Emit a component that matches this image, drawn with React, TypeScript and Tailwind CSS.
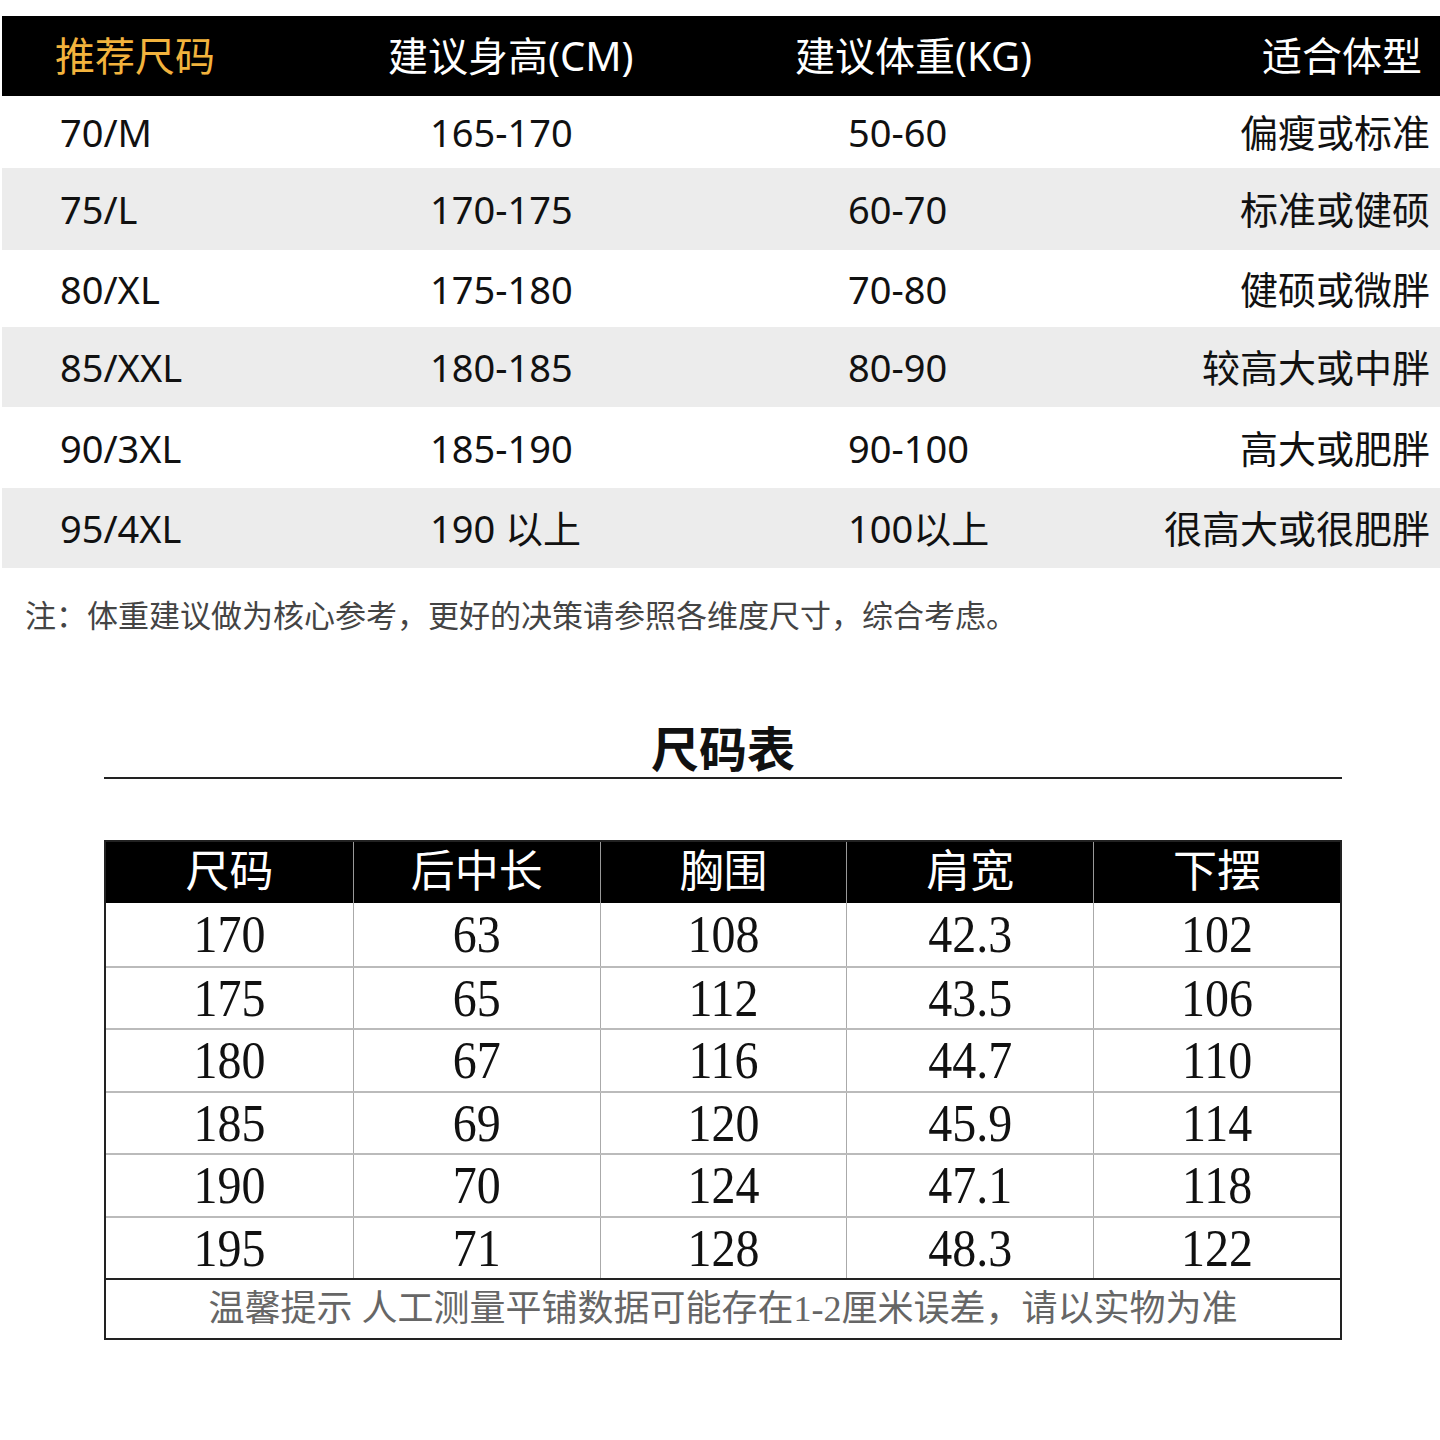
const topRows = [
  { size: "70/M", height: "165-170", weight: "50-60", body: "偏瘦或标准", h: "h-[72px]", bg: "bg-white" },
  { size: "75/L", height: "170-175", weight: "60-70", body: "标准或健硕", h: "h-[82px]", bg: "bg-[#ececec]" },
  { size: "80/XL", height: "175-180", weight: "70-80", body: "健硕或微胖", h: "h-[77px]", bg: "bg-white" },
  { size: "85/XXL", height: "180-185", weight: "80-90", body: "较高大或中胖", h: "h-[80px]", bg: "bg-[#ececec]" },
  { size: "90/3XL", height: "185-190", weight: "90-100", body: "高大或肥胖", h: "h-[81px]", bg: "bg-white" },
  { size: "95/4XL", height: "190 以上", weight: "100以上", body: "很高大或很肥胖", h: "h-[80px]", bg: "bg-[#ececec]" },
];

const chartHead = ["尺码", "后中长", "胸围", "肩宽", "下摆"];

const chartRows = [
  ["170", "63", "108", "42.3", "102"],
  ["175", "65", "112", "43.5", "106"],
  ["180", "67", "116", "44.7", "110"],
  ["185", "69", "120", "45.9", "114"],
  ["190", "70", "124", "47.1", "118"],
  ["195", "71", "128", "48.3", "122"],
];

export default function App() {
  return (
    <div className="w-[1440px] h-[1440px] bg-white overflow-hidden font-['Noto_Sans','Noto_Sans_CJK_SC',sans-serif]">
      {/* recommended size table */}
      <div className="pt-4 pl-[2px]">
        <div className="flex items-center h-20 bg-black text-[40px] leading-none text-white">
          <div className="w-[386px] pl-[53px] text-[#f2b33d]">推荐尺码</div>
          <div className="w-[407px]">建议身高(CM)</div>
          <div className="flex-1">建议体重(KG)</div>
          <div className="pr-[18px]">适合体型</div>
        </div>
        {topRows.map((r) => (
          <div key={r.size} className={`flex items-center text-[38px] leading-none text-[#111] ${r.h} ${r.bg}`}>
            <div className="w-[428px] pl-[58px]">{r.size}</div>
            <div className="w-[418px]">{r.height}</div>
            <div className="flex-1">{r.weight}</div>
            <div className="pr-[10px]">{r.body}</div>
          </div>
        ))}
      </div>

      <p className="mt-[32px] pl-[25px] text-[31px] leading-none text-[#444]">
        注：体重建议做为核心参考，更好的决策请参照各维度尺寸，综合考虑。
      </p>

      {/* size chart */}
      <div className="mt-[92px] ml-[104px] w-[1238px]">
        <div className="border-b-2 border-[#222] text-center text-[48px] font-semibold leading-[52px] text-[#111] pb-[2px]">
          尺码表
        </div>

        <div className="mt-[61px] border-2 border-[#222] font-['Liberation_Serif','Noto_Sans_CJK_SC',serif] text-[#111]">
          <div className="grid grid-cols-5 h-[61px] bg-black text-white text-[44px] leading-none">
            {chartHead.map((h, i) => (
              <div key={h} className={`flex items-center justify-center ${i > 0 ? "border-l border-[#999]" : ""}`}>
                {h}
              </div>
            ))}
          </div>
          {chartRows.map((row, ri) => (
            <div key={row[0]} className={`grid grid-cols-5 h-[62.5px] text-[48px] leading-none ${ri > 0 ? "border-t-2 border-[#bbb]" : ""}`}>
              {row.map((c, i) => (
                <div key={i} className={`flex items-center justify-center ${i > 0 ? "border-l border-[#aaa]" : ""}`}>
                  <span className="inline-block scale-y-[1.12]">{c}</span>
                </div>
              ))}
            </div>
          ))}
          <div className="flex items-center justify-center h-[60px] border-t-2 border-[#222] text-[36px] leading-none text-[#666]">
            温馨提示 人工测量平铺数据可能存在1-2厘米误差，请以实物为准
          </div>
        </div>
      </div>
    </div>
  );
}
